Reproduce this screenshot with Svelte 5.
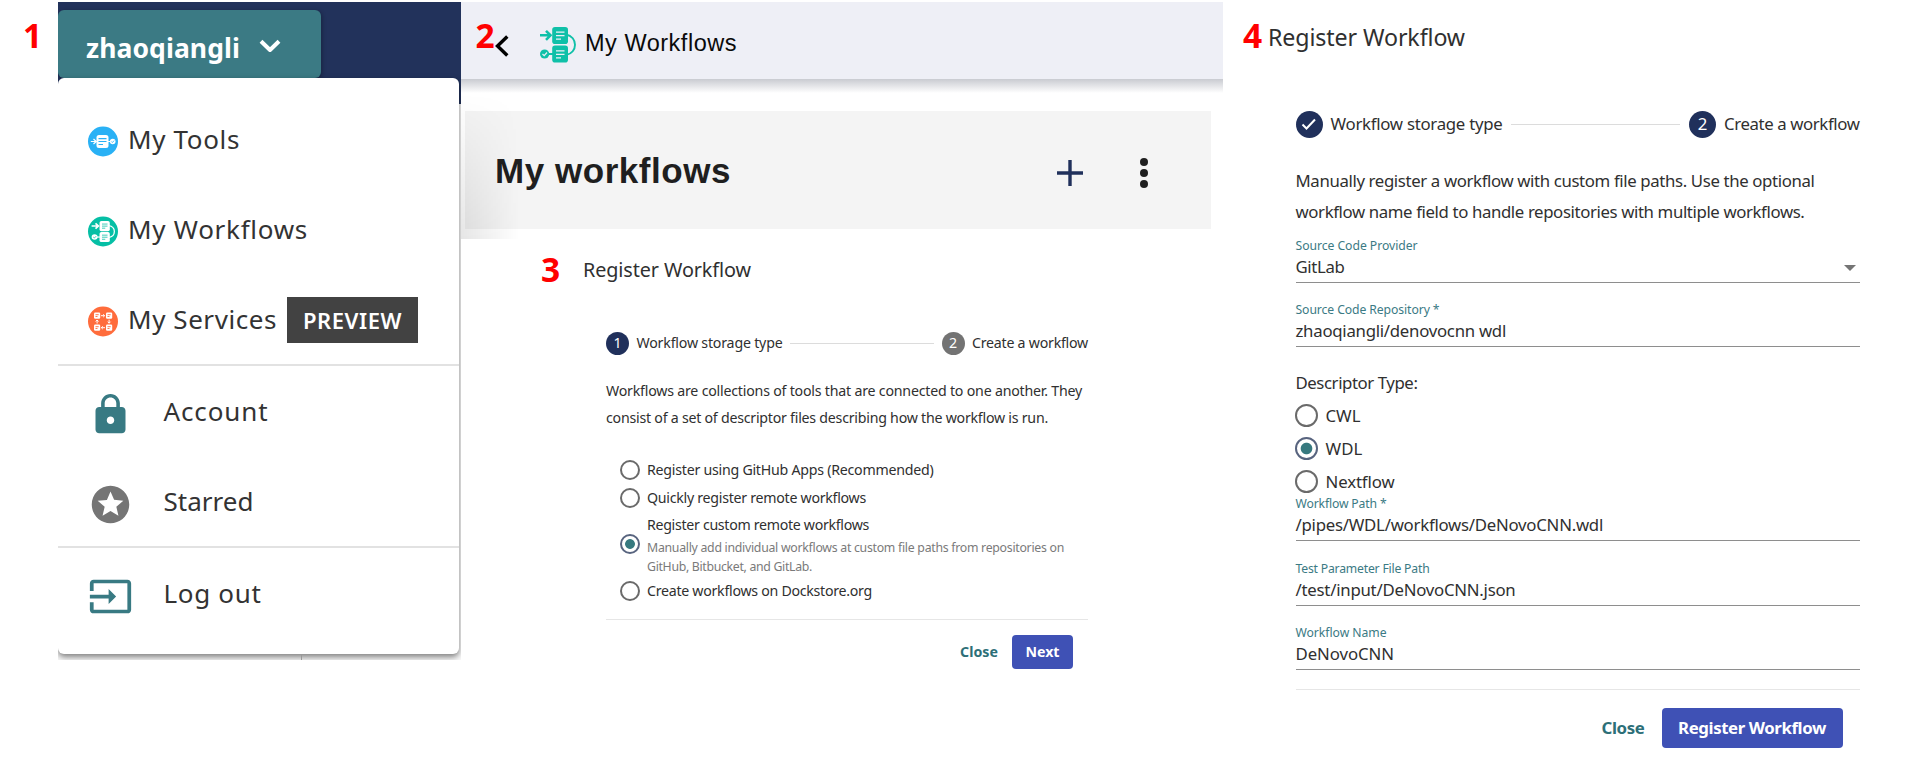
<script>
  // Spreads the letters of a label so that it takes exactly the given width.
  function fit(node, width) {
    const natural = node.getBoundingClientRect().width;
    node.style.letterSpacing = (width - natural) / node.textContent.length + 'px';
  }

  const entries = [
    { label: 'My Tools', width: 112, kind: 'tools' },
    { label: 'My Workflows', width: 180, kind: 'workflows' },
    { label: 'My Services', width: 149, kind: 'services', badge: 'PREVIEW' }
  ];

  const storage = [
    { label: 'Register using GitHub Apps (Recommended)', width: 286.5 },
    { label: 'Quickly register remote workflows', width: 219 },
    {
      label: 'Register custom remote workflows',
      width: 222,
      checked: true,
      hint: [
        ['Manually add individual workflows at custom file paths from repositories on', 417],
        ['GitHub, Bitbucket, and GitLab.', 165]
      ]
    },
    { label: 'Create workflows on Dockstore.org', width: 225 }
  ];

  const descriptors = [
    { label: 'CWL', width: 35 },
    { label: 'WDL', width: 37, checked: true },
    { label: 'Nextflow', width: 69 }
  ];
</script>

{#snippet t(text, width)}<span class="t" use:fit={width}>{text}</span>{/snippet}

{#snippet workflowGlyph(ink, paper)}
  <g fill="none" stroke={ink} stroke-width="2">
    <path d="M0 8.300h10M6 3.800 10.500 8.300 6 12.800" stroke-width="2.600" />
    <path d="M26 7.500c12 2 12 18.500 0 20.500" stroke-width="1.900" />
    <path d="M8 27h6" />
  </g>
  <rect x="12.200" y="0" width="15.800" height="17" rx="2.800" fill={ink} />
  <rect x="12.200" y="18.600" width="15.800" height="17" rx="2.800" fill={ink} />
  <path d="M16 5h8.500M16 8.500h8.500M16 12h5M16 23.800h8.500M16 27.300h8.500M16 30.800h5" stroke={paper} stroke-width="1.250" />
  <circle cx="4.600" cy="27" r="4.600" fill={ink} />
  <path d="m2.500 27 1.700 1.700 2.800-3.200" fill="none" stroke={paper} stroke-width="1.200" />
{/snippet}

{#snippet radio(checked)}
  <span class="radio" class:checked></span>
{/snippet}

{#snippet field(label, lw, value, vw, select)}
  <div class="field">
    <div class="label">{@render t(label, lw)}</div>
    <div class="value">
      {@render t(value, vw)}
      {#if select}<svg class="caret" width="12" height="6" viewBox="0 0 12 6"><path d="M0 0h12L6 6z" fill="#757575" /></svg>{/if}
    </div>
  </div>
{/snippet}

<main>
  <b class="num n1">1</b>
  <b class="num n2">2</b>
  <b class="num n3">3</b>
  <b class="num n4">4</b>

  <section class="account">
    <div class="user">
      {@render t('zhaoqiangli', 154)}
      <svg width="24" height="16" viewBox="0 0 24 16"><path d="M3 3.200 12 12l9-8.800" fill="none" stroke="#fff" stroke-width="4" stroke-linejoin="round" /></svg>
    </div>
    <div class="menu">
      {#each entries as e}
        <div class="entry">
          <svg class="disc" width="30" height="31" viewBox="0 0 30 30">
            {#if e.kind === 'tools'}
              <circle cx="15" cy="15" r="15" fill="#29b1f5" />
              <rect x="8.500" y="8.500" width="12" height="13" rx="2.500" fill="#fff" />
              <path d="M10.500 12.200h8M10.500 15h8M10.500 18h4.500" stroke="#29b1f5" stroke-width="1.200" />
              <path d="M2.800 15h5M5.500 12.500 8.300 15l-2.800 2.500M20 15h3" fill="none" stroke="#fff" stroke-width="1.200" />
              <circle cx="24.700" cy="15" r="2.800" fill="#fff" />
              <path d="m23.400 15 1 1 1.700-1.900" fill="none" stroke="#29b1f5" stroke-width=".8" />
            {:else if e.kind === 'workflows'}
              <circle cx="15" cy="15" r="15" fill="#05bfa5" />
              <g transform="translate(3.600 4.600) scale(.65 .59)">{@render workflowGlyph('#fff', '#05bfa5')}</g>
            {:else}
              <circle cx="15" cy="15" r="15" fill="#ff6c3c" />
              {#each [[6, 6], [18, 6], [6, 18], [18, 18]] as [x, y]}
                <rect {x} {y} width="6.200" height="6.200" rx="1.200" fill="#fff" />
                <path d="M{x + 1.5} {y + 2.2}h3.200M{x + 1.5} {y + 4}h2" stroke="#ff6c3c" stroke-width=".9" />
              {/each}
              <path d="M13 9.200h3.500M15.200 7.800l1.500 1.400-1.500 1.400M17 21.200h-3.500M14.800 19.800l-1.500 1.400 1.500 1.400M9.100 17v-3.500M7.700 15l1.400-1.500 1.400 1.500M21.100 13.200v3.500M19.700 15.200l1.400 1.500 1.400-1.500" fill="none" stroke="#fff" stroke-width="1" />
            {/if}
          </svg>
          {@render t(e.label, e.width)}
          {#if e.badge}<span class="badge">{@render t(e.badge, 99)}</span>{/if}
        </div>
      {/each}
      <hr />
      <div class="entry wide">
        <svg width="45" height="45" viewBox="0 0 24 24" fill="#387a83"><path d="M18 8h-1V6c0-2.760-2.240-5-5-5S7 3.240 7 6v2H6c-1.100 0-2 .9-2 2v10c0 1.100.9 2 2 2h12c1.100 0 2-.9 2-2V10c0-1.100-.9-2-2-2zm-6 9c-1.100 0-2-.9-2-2s.9-2 2-2 2 .9 2 2-.9 2-2 2zm3.100-9H8.900V6c0-1.710 1.390-3.100 3.100-3.100s3.100 1.390 3.100 3.100v2z" /></svg>
        {@render t('Account', 105)}
      </div>
      <div class="entry wide">
        <svg width="45" height="45" viewBox="0 0 24 24" fill="#757575"><path d="M11.990 2C6.470 2 2 6.480 2 12s4.470 10 9.990 10C17.520 22 22 17.520 22 12S17.520 2 11.990 2zm4.240 16L12 15.450 7.770 18l1.120-4.810-3.730-3.230 4.920-.42L12 5l1.920 4.530 4.920.42-3.730 3.230L16.230 18z" /></svg>
        {@render t('Starred', 90)}
      </div>
      <hr />
      <div class="entry wide">
        <svg width="45" height="45" viewBox="0 0 24 24" fill="#387a83"><path d="M21 3.010H3c-1.100 0-2 .9-2 2V9h2V4.990h18v14.030H3V15H1v4.010c0 1.100.9 1.980 2 1.980h18c1.100 0 2-.88 2-1.980v-14c0-1.110-.9-2-2-2zM11 16l4-4-4-4v3H1v2h10v3z" /></svg>
        {@render t('Log out', 98)}
      </div>
    </div>
    <div class="tick"></div>
  </section>

  <section class="middle">
    <header>
      <svg class="back" width="14" height="22" viewBox="0 0 14 22"><path d="M12.300 1.500 2.500 11l9.800 9.500" fill="none" stroke="#000" stroke-width="3.400" /></svg>
      <svg class="logo" width="37" height="36" viewBox="0 0 37 36">{@render workflowGlyph('#0fc0a8', '#eeeff6')}</svg>
      {@render t('My Workflows', 152)}
    </header>
    <div class="titlebar">
      {@render t('My workflows', 236)}
      <svg class="plus" width="28" height="28" viewBox="0 0 28 28"><path d="M14 1v26M1 14h26" stroke="#20305b" stroke-width="3.400" /></svg>
      <svg width="10" height="32" viewBox="0 0 10 32" fill="#1f1f1f"><circle cx="5" cy="5" r="4" /><circle cx="5" cy="16" r="4" /><circle cx="5" cy="27" r="4" /></svg>
    </div>
    <div class="shade"></div>

    <div class="dialog small">
      <h2>{@render t('Register Workflow', 168)}</h2>
      <div class="stepper">
        <i>1</i>{@render t('Workflow storage type', 146)}<span class="rule"></span><i class="off">2</i>{@render t('Create a workflow', 116)}
      </div>
      <p>
        {@render t('Workflows are collections of tools that are connected to one another. They', 476)}<br />
        {@render t('consist of a set of descriptor files describing how the workflow is run.', 442)}
      </p>
      <div class="options">
        {#each storage as s}
          <div class="option" class:tall={s.hint}>
            {@render radio(s.checked)}
            <div class="text">
              <div>{@render t(s.label, s.width)}</div>
              {#each s.hint ?? [] as [line, width]}
                <div class="hint">{@render t(line, width)}</div>
              {/each}
            </div>
          </div>
        {/each}
      </div>
      <footer>
        <span class="close">{@render t('Close', 38)}</span>
        <span class="button">{@render t('Next', 34)}</span>
      </footer>
    </div>
  </section>

  <section class="dialog large">
    <h2>{@render t('Register Workflow', 197)}</h2>
    <div class="stepper">
      <i><svg width="16" height="16" viewBox="0 0 16 16"><path d="m1.500 8.500 4 4L14 3.500" fill="none" stroke="#fff" stroke-width="2" /></svg></i>{@render t('Workflow storage type', 172)}<span class="rule"></span><i>2</i>{@render t('Create a workflow', 135.5)}
    </div>
    <p>
      {@render t('Manually register a workflow with custom file paths. Use the optional', 519)}<br />
      {@render t('workflow name field to handle repositories with multiple workflows.', 509)}
    </p>
    {@render field('Source Code Provider', 122, 'GitLab', 49, true)}
    {@render field('Source Code Repository *', 144, 'zhaoqiangli/denovocnn wdl', 210.5)}
    <div class="caption">{@render t('Descriptor Type:', 122)}</div>
    <div class="options">
      {#each descriptors as d}
        <div class="option">{@render radio(d.checked)}{@render t(d.label, d.width)}</div>
      {/each}
    </div>
    <div class="paths">
      {@render field('Workflow Path *', 91, '/pipes/WDL/workflows/DeNovoCNN.wdl', 307.5)}
      {@render field('Test Parameter File Path', 134, '/test/input/DeNovoCNN.json', 220)}
      {@render field('Workflow Name', 91, 'DeNovoCNN', 98.5)}
    </div>
    <footer>
      <span class="close">{@render t('Close', 43)}</span>
      <span class="button">{@render t('Register Workflow', 148)}</span>
    </footer>
  </section>
</main>

<style>
  :global(body) {
    margin: 0;
    background: #fff;
  }
  main {
    position: relative;
    display: flex;
    align-items: flex-start;
    box-sizing: border-box;
    width: 1908px;
    height: 777px;
    padding: 2px 0 0 58px;
    overflow: hidden;
    color: #303030;
    font-family: 'Noto Sans', 'Open Sans', sans-serif;
  }
  .t {
    display: inline-block;
    white-space: nowrap;
    flex: none;
  }
  svg {
    display: block;
    flex: none;
  }
  .num {
    position: absolute;
    z-index: 2;
    color: #f00;
    font-size: 33.500px;
    line-height: 34px;
  }
  .n1 { left: 23px; top: 18px; }
  .n2 { left: 475.500px; top: 18px; }
  .n3 { left: 541px; top: 252px; }
  .n4 { left: 1243px; top: 18px; }

  .account {
    position: relative;
    flex: none;
    box-sizing: border-box;
    width: 403px;
    height: 658px;
    padding-top: 8px;
    overflow: hidden;
    background: linear-gradient(#22325b 102px, #fafafa 102px);
  }
  .tick {
    position: absolute;
    left: 243px;
    bottom: 0;
    width: 1px;
    height: 6px;
    background: #999;
  }
  .user {
    display: flex;
    align-items: center;
    gap: 18px;
    box-sizing: border-box;
    width: 263px;
    height: 68px;
    padding: 7px 0 0 28px;
    border-radius: 6px;
    background: #3b7a84;
    box-shadow: 1px 1px 4px rgba(0, 0, 0, 0.3);
    color: #fff;
    font-size: 26.500px;
    font-weight: 700;
    line-height: 36px;
  }
  .user svg {
    margin-top: -3px;
  }
  .menu {
    box-sizing: border-box;
    position: relative;
    width: 401px;
    height: 576px;
    padding-top: 16px;
    border-radius: 6px;
    background: #fff;
    box-shadow: 0 3px 6px rgba(0, 0, 0, 0.5);
    color: #333;
    font-size: 26px;
  }
  .entry {
    display: flex;
    align-items: center;
    height: 90px;
    padding-left: 30px;
    line-height: 36px;
  }
  .entry .disc {
    margin: 5px 10px 0 0;
  }
  .entry.wide .t {
    margin: 0 0 0 30.500px;
  }
  .entry.wide svg {
    margin-top: 6px;
  }
  .badge {
    display: flex;
    align-items: center;
    justify-content: center;
    width: 131px;
    height: 46px;
    margin: 2px 0 0 10px;
    background: #424242;
    color: #fff;
    font-size: 22px;
    font-weight: 600;
  }
  hr {
    height: 2px;
    margin: 0;
    border: 0;
    background: #e2e2e2;
  }

  .middle {
    position: relative;
    flex: none;
    width: 762px;
  }
  header {
    display: flex;
    align-items: center;
    box-sizing: border-box;
    height: 77px;
    padding: 4px 0 0 34px;
    background: #eeeff6;
    color: #0a0a0a;
    font: 23.500px / 30px 'Liberation Sans', Arial, sans-serif;
  }
  header::after {
    content: '';
    position: absolute;
    left: 0;
    top: 77px;
    width: 762px;
    height: 14px;
    background: linear-gradient(#c9cbd1, #fff);
  }
  .back { margin-top: 6px; }
  .logo { margin: 4px 8px 0 31px; }
  .titlebar {
    display: flex;
    align-items: center;
    box-sizing: border-box;
    width: 746px;
    height: 118px;
    margin: 32px 0 0 4px;
    padding: 5px 62px 0 30px;
    background: #f4f4f4;
    color: #1f1f1f;
    font: 700 35px / 44px 'Liberation Sans', Arial, sans-serif;
  }
  .titlebar .t { margin-top: -4px; }
  .titlebar .plus {
    margin: 0 55px 0 auto;
  }
  .shade {
    position: absolute;
    left: 0;
    top: 91px;
    width: 58px;
    height: 146px;
    background: linear-gradient(to right, rgba(0, 0, 0, 0.1), transparent);
    mask-image: linear-gradient(transparent, #000);
  }

  h2 {
    margin: 0;
    font-weight: 400;
  }
  p { margin: 0; }
  .stepper,
  .option,
  .value,
  footer {
    display: flex;
    align-items: center;
  }
  .stepper i {
    display: flex;
    align-items: center;
    justify-content: center;
    flex: none;
    border-radius: 50%;
    background: #20305b;
    color: #fff;
    font-style: normal;
  }
  .stepper i.off { background: #737373; }
  .rule {
    flex: 1;
    height: 1px;
    background: #dcdcdc;
  }
  .radio {
    flex: none;
    box-sizing: border-box;
    border: 2px solid #6a6a6a;
    border-radius: 50%;
  }
  .radio.checked {
    border-color: #58647f;
    background: radial-gradient(circle closest-side, #37797f 0 56%, transparent 66%);
  }
  footer {
    box-sizing: border-box;
    justify-content: flex-end;
    border-top: 1px solid #e6e6e6;
    font-weight: 700;
  }
  .close { color: #2d6f78; }
  .button {
    display: flex;
    align-items: center;
    justify-content: center;
    border-radius: 4px;
    background: #3f51b5;
    color: #fff;
  }

  .small {
    width: 482px;
    padding: 26px 0 0 145px;
    font-size: 14.200px;
    line-height: 22px;
  }
  .small h2 {
    height: 30px;
    margin-left: -23px;
    font-size: 19.800px;
    line-height: 30px;
  }
  .small .stepper {
    height: 24px;
    margin-top: 46px;
  }
  .small .stepper i {
    width: 23px;
    height: 23px;
    margin-right: 7.500px;
  }
  .small .rule { margin: 0 8px 0 7px; }
  .small p {
    height: 54px;
    margin-top: 22px;
    line-height: 27px;
  }
  .small p .t { line-height: 27px; vertical-align: top; }
  .small .options {
    padding: 25px 0 0 14px;
  }
  .small .option { height: 28px; }
  .small .option.tall { height: 65px; }
  .small .radio {
    width: 20px;
    height: 20px;
    margin-right: 7px;
  }
  .small .hint {
    color: #7a7a7a;
    font-size: 12.300px;
    line-height: 19px;
  }
  .small .tall .radio { margin-top: -2px; }
  .small .tall .text > :first-child { margin-bottom: 2px; }
  .small .text .t {
    display: block;
    width: max-content;
  }
  .small footer {
    height: 50px;
    margin-top: 14px;
    padding: 14px 15px 0 0;
  }
  .small .button {
    width: 61px;
    height: 34px;
    margin-left: 14px;
  }

  .large {
    width: 564px;
    padding: 20px 0 0 72.500px;
    font-size: 16.800px;
    line-height: 28px;
  }
  .large h2 {
    height: 30px;
    margin-left: -27.500px;
    font-size: 23.200px;
    line-height: 30px;
  }
  .large .stepper {
    height: 28px;
    margin-top: 58px;
  }
  .large .stepper i {
    width: 27px;
    height: 27px;
    margin-right: 8px;
  }
  .large .rule { margin: 0 9px 0 8px; }
  .large p {
    height: 72px;
    margin-top: 27px;
  }
  .large p .t { line-height: 31.400px; vertical-align: top; }
  .field {
    box-sizing: border-box;
    height: 46px;
    margin-bottom: 18px;
    border-bottom: 1px solid #8e8e8e;
  }
  .label {
    height: 16.500px;
    color: #3b7a84;
    font-size: 12.200px;
    line-height: 17px;
  }
  .label .t,
  .value .t {
    display: block;
    width: max-content;
  }
  .value { height: 27.500px; }
  .caret { margin: 1px 4px 0 auto; }
  .caption {
    height: 24px;
    margin-top: 24px;
    line-height: 24px;
  }
  .large .options { padding-top: 4px; }
  .large .option { height: 33.200px; }
  .large .radio {
    width: 23px;
    height: 23px;
    margin: 0 7.500px 0 -.5px;
  }
  .paths { margin-top: -3.500px; }
  .paths .field { margin-bottom: 18.500px; }
  .large footer {
    height: 59px;
    padding: 18px 17px 0 0;
  }
  .large .button {
    width: 181px;
    height: 40px;
    margin-left: 17px;
  }
</style>
